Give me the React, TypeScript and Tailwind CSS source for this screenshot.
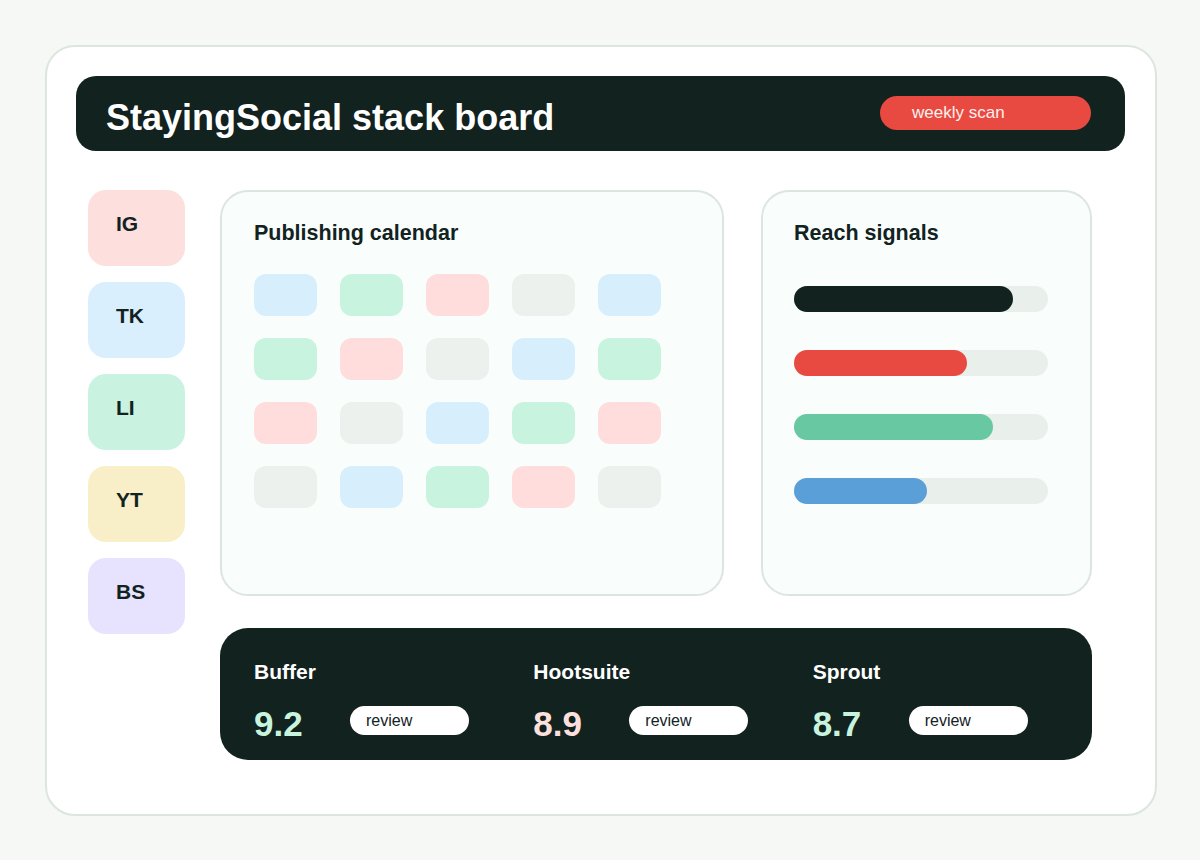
import React from "react";

const sides = [
  { label: "IG", bg: "bg-[#fde0de]" },
  { label: "TK", bg: "bg-[#d9effd]" },
  { label: "LI", bg: "bg-[#c9f3e0]" },
  { label: "YT", bg: "bg-[#f8efc9]" },
  { label: "BS", bg: "bg-[#e7e2fd]" },
];

const B = "bg-[#d7effd]";
const G = "bg-[#c8f4df]";
const R = "bg-[#fedddc]";
const N = "bg-[#edf1ee]";
const cells = [
  B, G, R, N, B,
  G, R, N, B, G,
  R, N, B, G, R,
  N, B, G, R, N,
];

const bars = [
  { w: 219, c: "bg-[#12221f]" },
  { w: 173, c: "bg-[#e84a41]" },
  { w: 199, c: "bg-[#67c8a2]" },
  { w: 133, c: "bg-[#5b9fd9]" },
];

const tools = [
  { name: "Buffer", score: "9.2", c: "text-[#c8f4df]" },
  { name: "Hootsuite", score: "8.9", c: "text-[#fde0de]" },
  { name: "Sprout", score: "8.7", c: "text-[#c8f4df]" },
];

export default function App() {
  return (
    <div
      className="w-[1200px] h-[860px] bg-[#f6f8f5] pt-[45px] pl-[45px]"
      style={{ fontFamily: '"Liberation Sans", Arial, sans-serif' }}
    >
      <div className="w-[1112px] h-[771px] bg-white border-2 border-[#dde5df] rounded-[30px] p-[29px]">
        <div className="h-[75px] w-[1049px] bg-[#12221f] rounded-[20px] flex items-center justify-between pl-[30px] pr-[34px]">
          <h1 className="text-white font-bold text-[36px] leading-none mt-[9px]">
            StayingSocial stack board
          </h1>
          <div className="w-[211px] h-[34px] rounded-full bg-[#e84a41] flex items-center pl-[32px] text-[17px] text-[#fdf0ee] -mt-[2px]">
            weekly scan
          </div>
        </div>

        <div className="flex mt-[39px] pl-[12px] gap-[35px]">
          <div className="flex flex-col gap-[16px]">
            {sides.map((s) => (
              <div
                key={s.label}
                className={`w-[97px] h-[76px] rounded-[18px] ${s.bg} pl-[28px] pt-[22px] text-[21px] font-bold text-[#12221f] leading-[24px]`}
              >
                {s.label}
              </div>
            ))}
          </div>

          <div className="w-[872px] flex flex-col gap-[32px]">
            <div className="flex gap-[37px] h-[406px]">
              <div className="w-[504px] h-full rounded-[28px] border-2 border-[#dde5df] bg-[#f9fefc] pl-[32px] pt-[29px]">
                <h2 className="text-[21.5px] font-bold text-[#12221f] leading-[25px]">
                  Publishing calendar
                </h2>
                <div className="grid grid-cols-[repeat(5,63px)] gap-x-[23px] gap-y-[22px] mt-[28px]">
                  {cells.map((c, i) => (
                    <div key={i} className={`h-[42px] rounded-[12px] ${c}`} />
                  ))}
                </div>
              </div>

              <div className="w-[331px] h-full rounded-[28px] border-2 border-[#dde5df] bg-[#f9fefc] pl-[31px] pt-[29px]">
                <h2 className="text-[21.5px] font-bold text-[#12221f] leading-[25px]">
                  Reach signals
                </h2>
                <div className="flex flex-col gap-[38px] mt-[40px]">
                  {bars.map((b, i) => (
                    <div key={i} className="w-[254px] h-[26px] rounded-full bg-[#e9efeb]">
                      <div
                        className={`h-full rounded-full ${b.c}`}
                        style={{ width: b.w }}
                      />
                    </div>
                  ))}
                </div>
              </div>
            </div>

            <div className="h-[132px] rounded-[28px] bg-[#12221f] flex pl-[34px] pt-[32px]">
              {tools.map((t) => (
                <div key={t.name} className="w-[280px]">
                  <div className="text-white font-bold text-[21px] leading-[24px]">
                    {t.name}
                  </div>
                  <div className="flex items-center mt-[20px]">
                    <div className={`w-[96px] font-bold text-[35px] leading-[40px] ${t.c}`}>
                      {t.score}
                    </div>
                    <div className="w-[119px] h-[29px] rounded-full bg-white flex items-center pl-[16px] text-[16px] text-[#12221f] -mt-[7px]">
                      review
                    </div>
                  </div>
                </div>
              ))}
            </div>
          </div>
        </div>
      </div>
    </div>
  );
}
